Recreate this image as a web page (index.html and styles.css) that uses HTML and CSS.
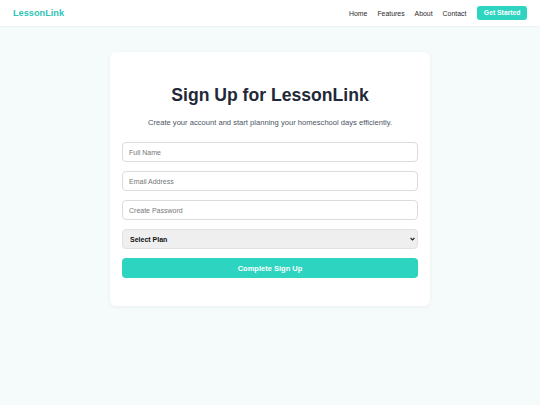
FILE: index.html
```html
<!DOCTYPE html>
<html>
<head>
<meta charset="utf-8">
<link rel="stylesheet" href="styles.css">
</head>
<body>
<header class="topbar">
  <div class="logo">LessonLink</div>
  <nav class="nav">
    <a href="#">Home</a>
    <a href="#">Features</a>
    <a href="#">About</a>
    <a href="#">Contact</a>
    <a href="#" class="cta">Get Started</a>
  </nav>
</header>
<main class="main">
  <section class="card">
    <h1 class="title">Sign Up for LessonLink</h1>
    <p class="sub">Create your account and start planning your homeschool days efficiently.</p>
    <form class="form">
      <input class="field" type="text" placeholder="Full Name">
      <input class="field" type="email" placeholder="Email Address">
      <input class="field" type="password" placeholder="Create Password">
      <div class="select-wrap">
        <select class="field select">
          <option>Select Plan</option>
        </select>
        <svg class="chev" width="5" height="4" viewBox="0 0 5 4"><path d="M0.6 1 L2.5 3 L4.4 1" fill="none" stroke="#222" stroke-width="1.2"/></svg>
      </div>
      <button class="submit" type="button">Complete Sign Up</button>
    </form>
  </section>
</main>
</body>
</html>
```
FILE: styles.css
```css
* { box-sizing: border-box; }
html, body { margin: 0; padding: 0; }
body {
  background: #f5fbfa;
  font-family: "Liberation Sans", Arial, sans-serif;
  color: #1f2937;
  height: 405px;
}
.topbar {
  height: 26px;
  background: #fff;
  display: flex;
  align-items: center;
  justify-content: space-between;
  padding: 0 13px;
  box-shadow: 0 1px 1px rgba(0,0,0,0.03);
}
.logo {
  color: #2ec4b6;
  font-weight: bold;
  font-size: 9.2px;
}
.nav {
  display: flex;
  align-items: center;
  gap: 10px;
}
.nav a {
  color: #2a2a2a;
  text-decoration: none;
  font-size: 6.9px;
}
.nav a.cta {
  background: #2dd4bf;
  color: #fff;
  font-weight: bold;
  font-size: 6.8px;
  padding: 3px 6.5px;
  border-radius: 3px;
  line-height: 8px;
  margin-left: 1px;
}
.main {
  display: flex;
  justify-content: center;
  padding-top: 26px;
}
.card {
  width: 320px;
  background: #fff;
  border-radius: 6px;
  box-shadow: 0 1px 4px rgba(0,0,0,0.05);
  padding: 32px 12px 28px;
}
.title {
  margin: 0;
  text-align: center;
  font-size: 17.6px;
  line-height: 22px;
  font-weight: bold;
  color: #1f2937;
}
.sub {
  margin: 11px 0 13px;
  text-align: center;
  font-size: 7.6px;
  line-height: 12px;
  color: #4b5563;
}
.form {
  display: flex;
  flex-direction: column;
  gap: 9px;
}
.field {
  display: block;
  width: 100%;
  height: 20px;
  border: 1px solid #dcdcdc;
  border-radius: 4px;
  padding: 0 6px;
  font-family: "Liberation Sans", Arial, sans-serif;
  font-size: 7px;
  color: #333;
  background: #fff;
  outline: none;
}
.field::placeholder { color: #777; }
.select-wrap {
  position: relative;
}
.select {
  -webkit-appearance: none;
  appearance: none;
  background: #efefef;
  border-color: #e2e2e2;
  color: #111;
  font-weight: bold;
  padding: 0 7px;
}
.chev {
  position: absolute;
  right: 3px;
  top: 8px;
  pointer-events: none;
}
.submit {
  height: 20px;
  border: none;
  border-radius: 4px;
  background: #2dd4bf;
  color: #fff;
  font-family: "Liberation Sans", Arial, sans-serif;
  font-weight: bold;
  font-size: 7.5px;
}
```
